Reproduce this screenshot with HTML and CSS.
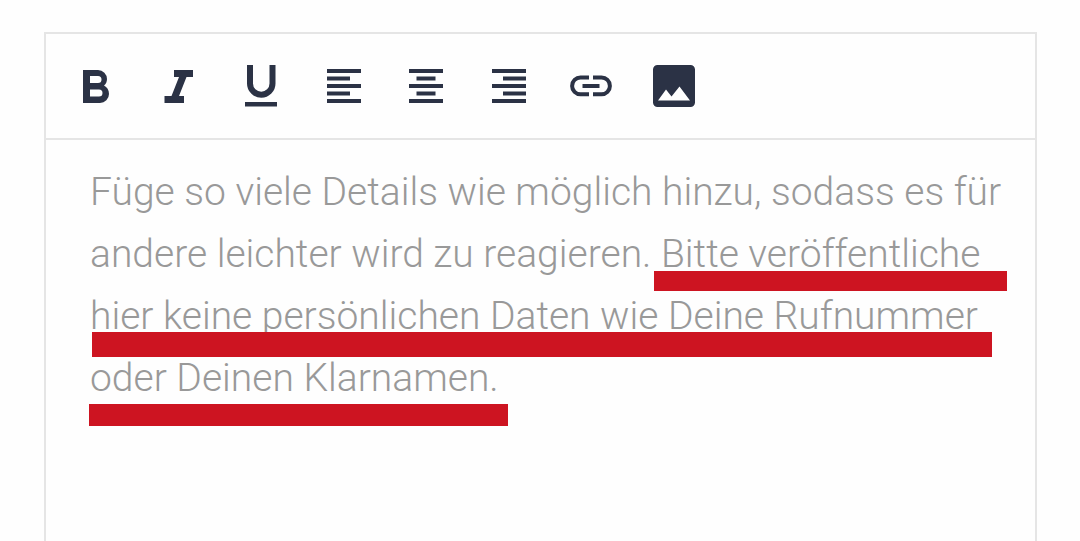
FILE: index.html
```html
<!DOCTYPE html>
<html lang="de">
<head>
<meta charset="utf-8">
<title>Editor</title>
<link rel="stylesheet" href="styles.css">
</head>
<body>

<div class="editor">
    <div class="toolbar">
        <div class="tools">
            <button class="tool" type="button" aria-label="Fett">
                <svg viewBox="0 0 50 50"><path fill-rule="evenodd" d="M12 9H27a9 9 0 0 1 9 9c0 2.500-1 5-3 6.500 3 1.500 5 4.500 5 8.500a9 9 0 0 1-9 9H12zM19 15v7h8a3.500 3.500 0 0 0 0-7zM19 28.500v7h9a3.500 3.500 0 0 0 0-7z"/></svg>
            </button>
            <button class="tool" type="button" aria-label="Kursiv">
                <svg viewBox="0 0 50 50"><path d="M20 9h19v7H32.500L25 35H30v7H10.500v-7h7L25 16h-5z"/></svg>
            </button>
            <button class="tool" type="button" aria-label="Unterstrichen">
                <svg viewBox="0 0 50 50"><path d="M11 4h6v18.500a8.200 8.200 0 0 0 16.500 0V4h6v18.500a14.200 14.200 0 0 1-28.500 0zM9 41h32v4.500H9z"/></svg>
            </button>
            <button class="tool" type="button" aria-label="Linksbündig">
                <svg viewBox="0 0 50 50"><path d="M8 8h34v4H8zM8 15.500h23v4H8zM8 23h34v4H8zM8 30.500h23v4H8zM8 38h34v4H8z"/></svg>
            </button>
            <button class="tool" type="button" aria-label="Zentriert">
                <svg viewBox="0 0 50 50"><path d="M8 8h34v4H8zM15.500 15.500h19v4h-19zM8 23h34v4H8zM15.500 30.500h19v4h-19zM8 38h34v4H8z"/></svg>
            </button>
            <button class="tool" type="button" aria-label="Rechtsbündig">
                <svg viewBox="0 0 50 50"><path d="M8 8h34v4H8zM19 15.500h23v4H19zM8 23h34v4H8zM19 30.500h23v4H19zM8 38h34v4H8z"/></svg>
            </button>
            <button class="tool" type="button" aria-label="Link einfügen">
                <svg viewBox="0 0 50 50"><path d="M23 14.500v4h-8.500a6.400 6.400 0 0 0 0 12.800H23v4h-8.500a10.400 10.400 0 0 1 0-20.800zM27 14.500h8.500a10.400 10.400 0 0 1 0 20.800H27v-4h8.500a6.400 6.400 0 0 0 0-12.800H27zM16.500 23h17v4h-17z"/></svg>
            </button>
            <button class="tool" type="button" aria-label="Bild einfügen">
                <svg viewBox="0 0 50 50"><path fill-rule="evenodd" d="M8.500 4h33a4.500 4.500 0 0 1 4.500 4.500v33a4.500 4.500 0 0 1-4.500 4.500h-33A4.500 4.500 0 0 1 4 41.500v-33A4.500 4.500 0 0 1 8.500 4zM9 39.500h32L30.500 25.500l-8 10-5.500-7z"/></svg>
            </button>
        </div>
    </div>
    <div class="content">
        <textarea class="text" aria-label="Beschreibung" placeholder="Füge so viele Details wie möglich hinzu, sodass es für andere leichter wird zu reagieren. Bitte veröffentliche hier keine persönlichen Daten wie Deine Rufnummer oder Deinen Klarnamen."></textarea>
        <span class="marker marker-first"></span>
        <span class="marker marker-second"></span>
        <span class="marker marker-third"></span>
    </div>
</div>

</body>
</html>
```
FILE: styles.css
```css
* {
    box-sizing: border-box;
}

body {
    display: flex;
    margin: 0;
    padding: 32px 43px 0 44px;
    min-height: 100vh;
    background: #fefefe;
    font-family: Roboto, sans-serif;
}

.editor {
    display: flex;
    flex-direction: column;
    flex: 1;
    border: 2px solid #e5e5e5;
    border-bottom: none;
}

.toolbar {
    padding: 27px 25px;
    border-bottom: 2px solid #e5e5e5;
}

.tools {
    display: flex;
    justify-content: space-between;
    max-width: 628px;
}

.tool {
    padding: 0;
    border: none;
    background: none;
    cursor: pointer;
}

.tool svg {
    display: block;
    width: 50px;
    height: 50px;
    fill: #2b3245;
}

.content {
    display: flex;
    flex: 1;
    position: relative;
}

.text {
    flex: 1;
    padding: 21px 24px 0 44px;
    border: none;
    outline: none;
    resize: none;
    background: none;
    font-family: inherit;
    font-size: 39px;
    font-weight: 300;
    line-height: 62px;
    color: #2b3245;
}

.text::placeholder {
    color: #999;
    opacity: 1;
}

/* red bars drawn over the text */
.marker {
    position: absolute;
    background: #cd1421;
    pointer-events: none;
}

.marker-first {
    top: 131px;
    left: 608px;
    width: 353px;
    height: 20px;
}

.marker-second {
    top: 192px;
    left: 46px;
    width: 900px;
    height: 25px;
}

.marker-third {
    top: 264px;
    left: 43px;
    width: 419px;
    height: 22px;
}
```
